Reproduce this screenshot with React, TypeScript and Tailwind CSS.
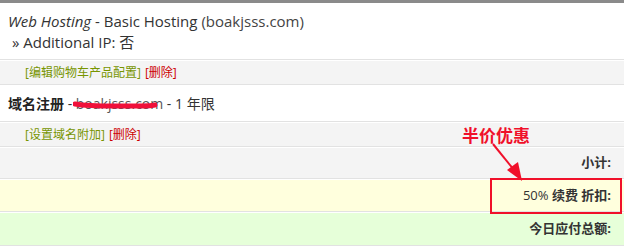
import React from 'react'

const sans = { fontFamily: '"Open Sans", "Noto Sans CJK SC", sans-serif' }

function LinkRow({ edit, remove }: { edit: string; remove: string }) {
  return (
    <div className="mt-px flex h-[24px] items-center border-b border-[#e2e2e2] bg-[#f4f4f4] pl-[25px] text-[12px] leading-none">
      <a className="text-[#779500]">[{edit}]</a>
      <span className="w-[4px]" />
      <a className="text-[#cc0000]">[{remove}]</a>
    </div>
  )
}

function TotalRow({ bg, h, children }: { bg: string; h: string; children: React.ReactNode }) {
  return (
    <div className={`mt-px flex items-center justify-end border-b border-[#e2e2e2] pr-[13px] text-[13px] font-bold text-[#333] ${bg} ${h}`}>
      {children}
    </div>
  )
}

export default function App() {
  return (
    <div className="relative h-[250px] w-[624px] overflow-hidden bg-white text-[#333]" style={sans}>
      <div className="h-[3px] bg-[#8a8a8a]" />

      <div className="flex h-[57px] flex-col justify-center border-b border-[#e2e2e2] pl-[8px] text-[15px] leading-[21px]">
        <div className="pt-px">
          <em>Web Hosting</em> - Basic Hosting <span className="text-[#444]">(boakjsss.com)</span>
        </div>
        <div>&nbsp;» Additional IP: 否</div>
      </div>

      <LinkRow edit="编辑购物车产品配置" remove="删除" />

      <div className="mt-px flex h-[36px] items-center border-b border-[#e2e2e2] pl-[8px] text-[14px]">
        <strong className="text-[#222]">域名注册</strong>
        <span>&nbsp;-&nbsp;</span>
        <span className="relative text-[#555]">
          boakjsss.com
          <svg className="absolute left-[-3px] top-[5px]" width="90" height="14" viewBox="0 0 90 14">
            <path
              d="M2 6 C 20 9, 40 8, 60 8 S 75 8, 82 7"
              stroke="#f0103a"
              strokeWidth="5"
              strokeLinecap="round"
              fill="none"
            />
          </svg>
        </span>
        <span>&nbsp;- 1 年限</span>
      </div>

      <LinkRow edit="设置域名附加" remove="删除" />

      <TotalRow bg="bg-[#f4f4f4]" h="h-[31px]">小计:</TotalRow>
      <TotalRow bg="bg-[#ffffdd]" h="h-[32px]">
        <span className="font-normal">50%</span>&nbsp;续费 折扣:
      </TotalRow>
      <TotalRow bg="bg-[#e6ffd9]" h="h-[33px]">今日应付总额:</TotalRow>

      {/* annotation overlay */}
      <div
        className="absolute left-[462px] top-[124px] text-[17px] font-bold leading-[22px] text-[#f0102a]"
        style={{ fontFamily: '"Noto Sans CJK SC", sans-serif' }}
      >
        半价优惠
      </div>
      <svg className="absolute left-0 top-0" width="624" height="250" viewBox="0 0 624 250">
        <line x1="493" y1="144" x2="514" y2="170" stroke="#f0102a" strokeWidth="2" />
        <polygon points="522,181 507,170 518,162" fill="#f0102a" />
        <rect x="491" y="179" width="130" height="34" fill="none" stroke="#f0102a" strokeWidth="2" />
      </svg>
    </div>
  )
}
